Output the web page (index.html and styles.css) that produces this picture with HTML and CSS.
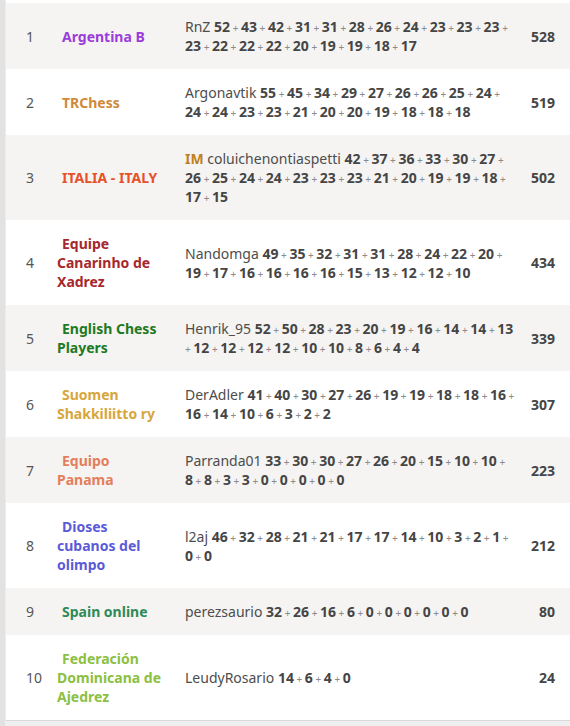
FILE: index.html
```
<!DOCTYPE html>
<html>
<head>
<meta charset="utf-8">
<link rel="stylesheet" href="styles.css">
</head>
<body>
<div class="page">
  <div class="board">
    <table class="standing">
      <tbody>
        <tr>
          <td class="rank">1</td>
          <td class="team c1">Argentina B</td>
          <td class="players"><span class="name">RnZ</span> <b>52</b><i> + </i><b>43</b><i> + </i><b>42</b><i> + </i><b>31</b><i> + </i><b>31</b><i> + </i><b>28</b><i> + </i><b>26</b><i> + </i><b>24</b><i> + </i><b>23</b><i> + </i><b>23</b><i> + </i><b>23</b><i> + </i><b>23</b><i> + </i><b>22</b><i> + </i><b>22</b><i> + </i><b>22</b><i> + </i><b>20</b><i> + </i><b>19</b><i> + </i><b>19</b><i> + </i><b>18</b><i> + </i><b>17</b></td>
          <td class="total">528</td>
        </tr>
        <tr>
          <td class="rank">2</td>
          <td class="team c2">TRChess</td>
          <td class="players"><span class="name">Argonavtik</span> <b>55</b><i> + </i><b>45</b><i> + </i><b>34</b><i> + </i><b>29</b><i> + </i><b>27</b><i> + </i><b>26</b><i> + </i><b>26</b><i> + </i><b>25</b><i> + </i><b>24</b><i> + </i><b>24</b><i> + </i><b>24</b><i> + </i><b>23</b><i> + </i><b>23</b><i> + </i><b>21</b><i> + </i><b>20</b><i> + </i><b>20</b><i> + </i><b>19</b><i> + </i><b>18</b><i> + </i><b>18</b><i> + </i><b>18</b></td>
          <td class="total">519</td>
        </tr>
        <tr>
          <td class="rank">3</td>
          <td class="team c3">ITALIA - ITALY</td>
          <td class="players"><span class="title">IM</span> <span class="name">coluichenontiaspetti</span> <b>42</b><i> + </i><b>37</b><i> + </i><b>36</b><i> + </i><b>33</b><i> + </i><b>30</b><i> + </i><b>27</b><i> + </i><b>26</b><i> + </i><b>25</b><i> + </i><b>24</b><i> + </i><b>24</b><i> + </i><b>23</b><i> + </i><b>23</b><i> + </i><b>23</b><i> + </i><b>21</b><i> + </i><b>20</b><i> + </i><b>19</b><i> + </i><b>19</b><i> + </i><b>18</b><i> + </i><b>17</b><i> + </i><b>15</b></td>
          <td class="total">502</td>
        </tr>
        <tr>
          <td class="rank">4</td>
          <td class="team c4">Equipe Canarinho de Xadrez</td>
          <td class="players"><span class="name">Nandomga</span> <b>49</b><i> + </i><b>35</b><i> + </i><b>32</b><i> + </i><b>31</b><i> + </i><b>31</b><i> + </i><b>28</b><i> + </i><b>24</b><i> + </i><b>22</b><i> + </i><b>20</b><i> + </i><b>19</b><i> + </i><b>17</b><i> + </i><b>16</b><i> + </i><b>16</b><i> + </i><b>16</b><i> + </i><b>16</b><i> + </i><b>15</b><i> + </i><b>13</b><i> + </i><b>12</b><i> + </i><b>12</b><i> + </i><b>10</b></td>
          <td class="total">434</td>
        </tr>
        <tr>
          <td class="rank">5</td>
          <td class="team c5">English Chess Players</td>
          <td class="players"><span class="name">Henrik_95</span> <b>52</b><i> + </i><b>50</b><i> + </i><b>28</b><i> + </i><b>23</b><i> + </i><b>20</b><i> + </i><b>19</b><i> + </i><b>16</b><i> + </i><b>14</b><i> + </i><b>14</b><i> + </i><b>13</b><i> + </i><b>12</b><i> + </i><b>12</b><i> + </i><b>12</b><i> + </i><b>12</b><i> + </i><b>10</b><i> + </i><b>10</b><i> + </i><b>8</b><i> + </i><b>6</b><i> + </i><b>4</b><i> + </i><b>4</b></td>
          <td class="total">339</td>
        </tr>
        <tr>
          <td class="rank">6</td>
          <td class="team c6">Suomen Shakkiliitto ry</td>
          <td class="players"><span class="name">DerAdler</span> <b>41</b><i> + </i><b>40</b><i> + </i><b>30</b><i> + </i><b>27</b><i> + </i><b>26</b><i> + </i><b>19</b><i> + </i><b>19</b><i> + </i><b>18</b><i> + </i><b>18</b><i> + </i><b>16</b><i> + </i><b>16</b><i> + </i><b>14</b><i> + </i><b>10</b><i> + </i><b>6</b><i> + </i><b>3</b><i> + </i><b>2</b><i> + </i><b>2</b></td>
          <td class="total">307</td>
        </tr>
        <tr>
          <td class="rank">7</td>
          <td class="team c7">Equipo Panama</td>
          <td class="players"><span class="name">Parranda01</span> <b>33</b><i> + </i><b>30</b><i> + </i><b>30</b><i> + </i><b>27</b><i> + </i><b>26</b><i> + </i><b>20</b><i> + </i><b>15</b><i> + </i><b>10</b><i> + </i><b>10</b><i> + </i><b>8</b><i> + </i><b>8</b><i> + </i><b>3</b><i> + </i><b>3</b><i> + </i><b>0</b><i> + </i><b>0</b><i> + </i><b>0</b><i> + </i><b>0</b><i> + </i><b>0</b></td>
          <td class="total">223</td>
        </tr>
        <tr>
          <td class="rank">8</td>
          <td class="team c8">Dioses cubanos del olimpo</td>
          <td class="players"><span class="name">l2aj</span> <b>46</b><i> + </i><b>32</b><i> + </i><b>28</b><i> + </i><b>21</b><i> + </i><b>21</b><i> + </i><b>17</b><i> + </i><b>17</b><i> + </i><b>14</b><i> + </i><b>10</b><i> + </i><b>3</b><i> + </i><b>2</b><i> + </i><b>1</b><i> + </i><b>0</b><i> + </i><b>0</b></td>
          <td class="total">212</td>
        </tr>
        <tr>
          <td class="rank">9</td>
          <td class="team c9">Spain online</td>
          <td class="players"><span class="name">perezsaurio</span> <b>32</b><i> + </i><b>26</b><i> + </i><b>16</b><i> + </i><b>6</b><i> + </i><b>0</b><i> + </i><b>0</b><i> + </i><b>0</b><i> + </i><b>0</b><i> + </i><b>0</b><i> + </i><b>0</b></td>
          <td class="total">80</td>
        </tr>
        <tr>
          <td class="rank">10</td>
          <td class="team c10">Federación Dominicana de Ajedrez</td>
          <td class="players"><span class="name">LeudyRosario</span> <b>14</b><i> + </i><b>6</b><i> + </i><b>4</b><i> + </i><b>0</b></td>
          <td class="total">24</td>
        </tr>
      </tbody>
    </table>
  </div>
</div>
</body>
</html>
```
FILE: styles.css
```
html, body {
  margin: 0;
  padding: 0;
}
body {
  background: #efefef;
  font-family: "Noto Sans", "Open Sans", sans-serif;
  font-size: 14px;
  color: #4d4d4d;
}
.page {
  width: 570px;
  height: 726px;
  overflow: hidden;
  display: flex;
  background: #efefef;
}
.page::before {
  content: "";
  flex: 0 0 5px;
  background: #e2e2e2;
  border-right: 1px solid #ececec;
}
.board {
  flex: 1;
  background: #fff;
  padding-top: 3px;
  align-self: flex-start;
  border-bottom: 1px solid #d9d9d9;
}
.standing {
  width: 100%;
  border-collapse: collapse;
  table-layout: fixed;
}
.standing tr:nth-child(odd) {
  background: #f5f4f2;
}
.standing tr:nth-child(even) {
  background: #fff;
}
.standing td {
  padding: 14px 0;
  line-height: 19px;
  vertical-align: middle;
}
.rank {
  width: 31px;
  padding-left: 20px !important;
  color: #555;
}
.team {
  width: 107px;
  padding-right: 21px !important;
  font-weight: bold;
  text-indent: 5px;
}
.players {
  width: 330px;
}
.players .name {
  color: #4d4d4d;
}
.players .title {
  color: #bf811d;
  font-weight: bold;
}
.players b {
  font-weight: bold;
  font-size: 14px;
  color: #454545;
}
.players i {
  font-style: normal;
  font-size: 10px;
  line-height: 10px;
  color: #8a8a8a;
}
.total {
  width: 40px;
  text-align: right;
  padding-right: 15px !important;
  font-weight: bold;
  color: #454545;
}
.c1 { color: #9b3ddb; }
.c2 { color: #d08a3a; }
.c3 { color: #e6512a; }
.c4 { color: #a6282c; }
.c5 { color: #1e7a22; }
.c6 { color: #d6a63c; }
.c7 { color: #e47e5b; }
.c8 { color: #5b5bd8; }
.c9 { color: #2f8a58; }
.c10 { color: #8cc043; }
```
